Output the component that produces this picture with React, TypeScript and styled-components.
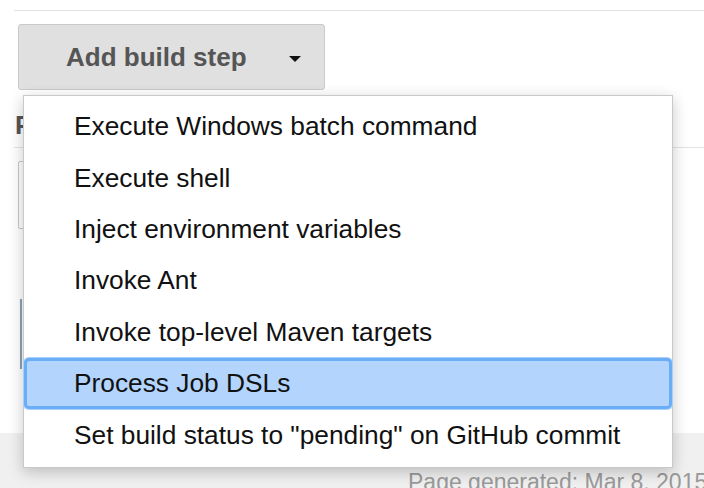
import React from "react";
import styled, { createGlobalStyle } from "styled-components";

const Global = createGlobalStyle`
  html, body { margin: 0; padding: 0; background: #fff; }
  body { font-family: "Liberation Sans", Arial, sans-serif; }
`;

const Page = styled.div`
  position: relative;
  width: 704px;
  height: 488px;
  overflow: hidden;
  background: #fff;
  display: flex;
  flex-direction: column;
`;

const Content = styled.div`
  padding: 10px 0 0 14px;
  flex: 1;
  display: flex;
  flex-direction: column;
`;

const TopRule = styled.div`
  border-top: 1px solid #e2e2e2;
  padding: 13px 0 0 4px;
`;

const AddButton = styled.div`
  box-sizing: border-box;
  width: 307px;
  height: 66px;
  background: #e0e0e0;
  border: 1px solid #cacaca;
  border-radius: 3px;
  display: flex;
  align-items: center;
  padding: 0 0 0 47px;
  font: bold 26px "Liberation Sans", Arial, sans-serif;
  color: #555;
`;

const Caret = styled.span`
  margin-left: auto;
  margin-right: 23px;
  width: 0;
  height: 0;
  border-left: 6px solid transparent;
  border-right: 6px solid transparent;
  border-top: 6px solid #111;
  margin-top: 4px;
`;

const SectionHeader = styled.div`
  margin-top: 22px;
  padding: 0 0 9px 1px;
  border-bottom: 1px solid #e2e2e2;
  font: bold 26px "Liberation Sans", Arial, sans-serif;
  color: #555;
  line-height: 26px;
`;

const Field = styled.div`
  margin: 13px 0 0 4px;
  width: 200px;
  height: 68px;
  box-sizing: border-box;
  border: 1px solid #c8c8c8;
  border-radius: 2px;
`;

const TextArea = styled.div`
  margin: 70px 0 0 6px;
  width: 200px;
  height: 70px;
  border-left: 2px solid #8aa2b4;
`;

const Footer = styled.div`
  height: 55px;
  box-sizing: border-box;
  background: #f0f0f0;
  padding: 38px 0 0 408px;
  font-size: 23px;
  color: #9a9a9a;
  white-space: nowrap;
  line-height: 1;
`;

const Menu = styled.ul`
  position: absolute;
  left: 23px;
  top: 95px;
  width: 650px;
  height: 373px;
  box-sizing: border-box;
  margin: 0;
  padding: 5px 0 0;
  list-style: none;
  background: #fff;
  border: 1px solid #c9c9c9;
  box-shadow: 0 4px 14px rgba(0, 0, 0, 0.22);
`;

const Item = styled.li<{ $active?: boolean }>`
  box-sizing: border-box;
  height: 51.4px;
  display: flex;
  align-items: center;
  padding-left: 50px;
  font: 26.3px "Liberation Sans", Arial, sans-serif;
  color: #111;
  white-space: nowrap;
  ${(p) =>
    p.$active &&
    `
    background: #b3d4fd;
    border: 3px solid #6aaef8;
    border-radius: 5px;
    padding-left: 47px;
    box-shadow: 0 0 0 1px #abd0fa;
  `}
`;

const items = [
  "Execute Windows batch command",
  "Execute shell",
  "Inject environment variables",
  "Invoke Ant",
  "Invoke top-level Maven targets",
  "Process Job DSLs",
  'Set build status to "pending" on GitHub commit',
];

export default function App() {
  return (
    <Page>
      <Global />
      <Content>
        <TopRule>
          <AddButton>
            Add build step
            <Caret />
          </AddButton>
        </TopRule>
        <SectionHeader>Post-build Actions</SectionHeader>
        <Field />
        <TextArea />
      </Content>
      <Footer>Page generated: Mar 8, 2015 2:14:11 PM</Footer>
      <Menu>
        {items.map((t) => (
          <Item key={t} $active={t === "Process Job DSLs"}>
            {t}
          </Item>
        ))}
      </Menu>
    </Page>
  );
}
